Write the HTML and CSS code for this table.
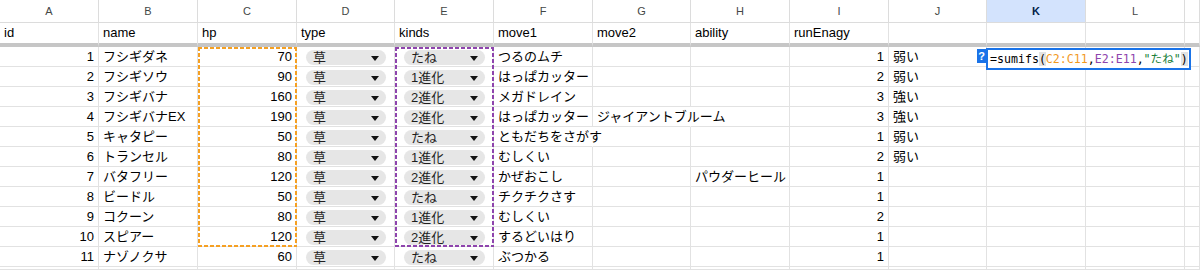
FILE: index.html
```html
<!DOCTYPE html>
<html lang="ja">
<head>
<meta charset="utf-8">
<title>Sheet</title>
<link rel="stylesheet" href="styles.css">
</head>
<body>
<div class="sheet">
  <div class="ch">A</div><div class="ch">B</div><div class="ch">C</div><div class="ch">D</div><div class="ch">E</div><div class="ch">F</div><div class="ch">G</div><div class="ch">H</div><div class="ch">I</div><div class="ch">J</div><div class="ch ch-sel">K</div><div class="ch">L</div><div class="ch"></div>

  <div class="c hd">id</div><div class="c hd">name</div><div class="c hd">hp</div><div class="c hd">type</div><div class="c hd">kinds</div><div class="c hd">move1</div><div class="c hd">move2</div><div class="c hd">ability</div><div class="c hd">runEnagy</div><div class="c hd"></div><div class="c hd"></div><div class="c hd"></div><div class="c hd"></div>

  <div class="c n">1</div><div class="c">フシギダネ</div><div class="c n">70<div class="rng rng-org"></div></div><div class="c k"><div class="chip"><span>草</span><i class="tri"></i></div></div><div class="c k"><div class="chip"><span>たね</span><i class="tri"></i></div><div class="rng rng-pur"></div></div><div class="c">つるのムチ</div><div class="c"></div><div class="c"></div><div class="c n">1</div><div class="c">弱い</div><div class="c"><span class="tag">?</span><div class="editor">=sumifs<span class="pm">(</span><span class="f-org">C2:C11</span>,<span class="f-pur">E2:E11</span>,<span class="f-grn">"たね"</span><span class="pm">)</span></div></div><div class="c"></div><div class="c"></div>

  <div class="c n">2</div><div class="c">フシギソウ</div><div class="c n">90</div><div class="c k"><div class="chip"><span>草</span><i class="tri"></i></div></div><div class="c k"><div class="chip"><span>1進化</span><i class="tri"></i></div></div><div class="c">はっぱカッター</div><div class="c"></div><div class="c"></div><div class="c n">2</div><div class="c">弱い</div><div class="c"></div><div class="c"></div><div class="c"></div>

  <div class="c n">3</div><div class="c">フシギバナ</div><div class="c n">160</div><div class="c k"><div class="chip"><span>草</span><i class="tri"></i></div></div><div class="c k"><div class="chip"><span>2進化</span><i class="tri"></i></div></div><div class="c">メガドレイン</div><div class="c"></div><div class="c"></div><div class="c n">3</div><div class="c">強い</div><div class="c"></div><div class="c"></div><div class="c"></div>

  <div class="c n">4</div><div class="c">フシギバナEX</div><div class="c n">190</div><div class="c k"><div class="chip"><span>草</span><i class="tri"></i></div></div><div class="c k"><div class="chip"><span>2進化</span><i class="tri"></i></div></div><div class="c">はっぱカッター</div><div class="c spill">ジャイアントブルーム</div><div class="c"></div><div class="c n">3</div><div class="c">強い</div><div class="c"></div><div class="c"></div><div class="c"></div>

  <div class="c n">5</div><div class="c">キャタピー</div><div class="c n">50</div><div class="c k"><div class="chip"><span>草</span><i class="tri"></i></div></div><div class="c k"><div class="chip"><span>たね</span><i class="tri"></i></div></div><div class="c spill">ともだちをさがす</div><div class="c"></div><div class="c"></div><div class="c n">1</div><div class="c">弱い</div><div class="c"></div><div class="c"></div><div class="c"></div>

  <div class="c n">6</div><div class="c">トランセル</div><div class="c n">80</div><div class="c k"><div class="chip"><span>草</span><i class="tri"></i></div></div><div class="c k"><div class="chip"><span>1進化</span><i class="tri"></i></div></div><div class="c">むしくい</div><div class="c"></div><div class="c"></div><div class="c n">2</div><div class="c">弱い</div><div class="c"></div><div class="c"></div><div class="c"></div>

  <div class="c n">7</div><div class="c">バタフリー</div><div class="c n">120</div><div class="c k"><div class="chip"><span>草</span><i class="tri"></i></div></div><div class="c k"><div class="chip"><span>2進化</span><i class="tri"></i></div></div><div class="c">かぜおこし</div><div class="c"></div><div class="c">パウダーヒール</div><div class="c n">1</div><div class="c"></div><div class="c"></div><div class="c"></div><div class="c"></div>

  <div class="c n">8</div><div class="c">ビードル</div><div class="c n">50</div><div class="c k"><div class="chip"><span>草</span><i class="tri"></i></div></div><div class="c k"><div class="chip"><span>たね</span><i class="tri"></i></div></div><div class="c">チクチクさす</div><div class="c"></div><div class="c"></div><div class="c n">1</div><div class="c"></div><div class="c"></div><div class="c"></div><div class="c"></div>

  <div class="c n">9</div><div class="c">コクーン</div><div class="c n">80</div><div class="c k"><div class="chip"><span>草</span><i class="tri"></i></div></div><div class="c k"><div class="chip"><span>1進化</span><i class="tri"></i></div></div><div class="c">むしくい</div><div class="c"></div><div class="c"></div><div class="c n">2</div><div class="c"></div><div class="c"></div><div class="c"></div><div class="c"></div>

  <div class="c n">10</div><div class="c">スピアー</div><div class="c n">120</div><div class="c k"><div class="chip"><span>草</span><i class="tri"></i></div></div><div class="c k"><div class="chip"><span>2進化</span><i class="tri"></i></div></div><div class="c">するどいはり</div><div class="c"></div><div class="c"></div><div class="c n">1</div><div class="c"></div><div class="c"></div><div class="c"></div><div class="c"></div>

  <div class="c n">11</div><div class="c">ナゾノクサ</div><div class="c n">60</div><div class="c k"><div class="chip"><span>草</span><i class="tri"></i></div></div><div class="c k"><div class="chip"><span>たね</span><i class="tri"></i></div></div><div class="c">ぶつかる</div><div class="c"></div><div class="c"></div><div class="c n">1</div><div class="c"></div><div class="c"></div><div class="c"></div><div class="c"></div>

  <div class="c"></div><div class="c"></div><div class="c"></div><div class="c"></div><div class="c"></div><div class="c"></div><div class="c"></div><div class="c"></div><div class="c"></div><div class="c"></div><div class="c"></div><div class="c"></div><div class="c"></div>
</div>
</body>
</html>
```
FILE: styles.css
```css
html, body {
  margin: 0;
  padding: 0;
  background: #ffffff;
}

body {
  font-family: "Liberation Sans", "Noto Sans CJK JP", Arial, sans-serif;
  font-size: 13px;
  color: #000000;
  width: 1200px;
  height: 270px;
  overflow: hidden;
}

.sheet {
  display: grid;
  grid-template-columns: 99px 99px 99px 98px 99px 99px 98px 99px 99px 98px 99px 99px 15px;
  grid-template-rows: 23px 24px repeat(11, 20px) 3px;
  width: 1200px;
  height: 270px;
  overflow: hidden;
}

.ch {
  box-sizing: border-box;
  border-right: 1px solid #dcdcdc;
  border-bottom: 1px solid #dcdcdc;
  text-align: center;
  font-size: 11px;
  line-height: 22px;
  color: #444746;
}

.ch-sel {
  background: #d3e3fd;
  color: #041e49;
  font-weight: bold;
}

.c {
  box-sizing: border-box;
  position: relative;
  border-right: 1px solid #e2e2e2;
  border-bottom: 1px solid #e2e2e2;
  padding: 0 3px 0 4px;
  line-height: 19px;
  white-space: nowrap;
}

.hd {
  border-bottom: 4px solid #c6c6c6;
  line-height: 20px;
}

.n {
  text-align: right;
  padding-right: 4px;
}

.spill {
  border-right-color: transparent;
}

.k {
  padding: 3px 8px 0 9px;
  text-align: left;
}

.chip {
  display: flex;
  align-items: center;
  justify-content: space-between;
  height: 15px;
  line-height: 15px;
  border-radius: 8px;
  background: #e6e6e6;
  padding: 0 7px 0 7px;
  color: #1f1f1f;
}

.tri {
  display: block;
  width: 0;
  height: 0;
  margin-top: 1px;
  border-left: 4px solid transparent;
  border-right: 4px solid transparent;
  border-top: 5px solid #111111;
}

.rng {
  position: absolute;
  left: 0;
  top: 0;
  width: 99px;
  height: 200px;
  z-index: 2;
  pointer-events: none;
}

.rng-org {
  background:
    repeating-linear-gradient(90deg, #f5a023 0 4px, transparent 4px 6px) left top / 100% 2px no-repeat,
    repeating-linear-gradient(90deg, #f5a023 0 4px, transparent 4px 6px) left bottom / 100% 2px no-repeat,
    repeating-linear-gradient(180deg, #f5a023 0 4px, transparent 4px 6px) left top / 2px 100% no-repeat,
    repeating-linear-gradient(180deg, #f5a023 0 4px, transparent 4px 6px) right top / 2px 100% no-repeat;
}

.rng-pur {
  background:
    repeating-linear-gradient(90deg, #8e44ad 0 4px, transparent 4px 6px) left top / 100% 2px no-repeat,
    repeating-linear-gradient(90deg, #8e44ad 0 4px, transparent 4px 6px) left bottom / 100% 2px no-repeat,
    repeating-linear-gradient(180deg, #8e44ad 0 4px, transparent 4px 6px) left top / 2px 100% no-repeat,
    repeating-linear-gradient(180deg, #8e44ad 0 4px, transparent 4px 6px) right top / 2px 100% no-repeat;
}

.editor {
  position: absolute;
  left: -1px;
  top: 1px;
  width: 205px;
  height: 22px;
  box-sizing: border-box;
  border: 2px solid #1a73e8;
  background: #ffffff;
  padding-left: 2px;
  font-family: "DejaVu Sans Mono", "Liberation Mono", "Noto Sans CJK JP", monospace;
  font-size: 11.6px;
  line-height: 18px;
  color: #000000;
  z-index: 3;
}

.tag {
  position: absolute;
  left: -10px;
  top: 2px;
  width: 9px;
  height: 14px;
  background: #1a73e8;
  color: #ffffff;
  font-size: 11px;
  font-weight: bold;
  line-height: 14px;
  text-align: center;
  z-index: 3;
}

.pm {
  background: #e3e3e3;
}

.f-org {
  color: #f29a1f;
}

.f-pur {
  color: #8e44ad;
}

.f-grn {
  color: #188038;
}
```
